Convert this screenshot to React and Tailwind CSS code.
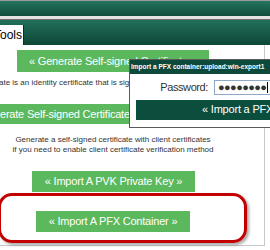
const font = { fontFamily: '"Liberation Sans", Arial, sans-serif' }

function GreenButton({ className, children }) {
  return (
    <div
      className={`flex items-center whitespace-nowrap bg-[#5cb85c] text-[11px] tracking-[-0.2px] text-white ${className}`}
    >
      {children}
    </div>
  )
}

export default function App() {
  return (
    <div
      className="relative h-[250px] w-[270px] overflow-hidden bg-white text-[#333]"
      style={font}
    >
      {/* header bars */}
      <div className="h-px bg-[#9a9a9a]" />
      <div className="h-[15px] bg-gradient-to-b from-[#25765f] to-[#0f4b3c]" />
      <div className="h-[3px] bg-[#e2e2e2]" />
      <div className="h-px bg-[#6f6f6f]" />
      <div className="flex h-[25px] items-end bg-gradient-to-b from-[#22705a] to-[#0e4737]">
        <div className="flex h-[20px] w-[24px] items-center justify-end overflow-hidden border-r border-[#0a3026] bg-white pr-[1px] text-[12px] text-black">
          Tools
        </div>
      </div>

      {/* content */}
      <div className="flex h-[201px] w-[265px] flex-col border-r border-b border-[#c8c8c8]">
        <GreenButton className="ml-[17px] mt-[5px] h-[22px] w-[192px] pl-[12px]">
          « Generate Self-signed Certificate »
        </GreenButton>
        <p className="-ml-[1px] mt-[6px] h-[10px] whitespace-nowrap text-[8px] leading-[10px]">
          ate is an identity certificate that is signed by its own creator.
        </p>
        <GreenButton className="-ml-[40px] mt-[16px] h-[20px] w-[200px] pl-[11px]">
          « Generate Self-signed Certificate »
        </GreenButton>
        <div className="mt-[11px] w-[226px] text-center text-[8px] leading-[10px]">
          <p className="whitespace-nowrap">Generate a self-signed certificate with client certificates</p>
          <p className="whitespace-nowrap">if you need to enable client certificate verification method</p>
        </div>
        <GreenButton className="ml-[32px] mt-[16px] h-[21px] w-[163px] justify-center">
          « Import A PVK Private Key »
        </GreenButton>
        <GreenButton className="ml-[36px] mt-[19px] h-[21px] w-[154px] justify-center">
          « Import A PFX Container »
        </GreenButton>
      </div>

      {/* annotation */}
      <div className="absolute left-[-2px] top-[193px] h-[50px] w-[249px] rounded-[14px] border-[3px] border-[#c20000] shadow-[2px_2px_3px_rgba(0,0,0,0.35)]" />

      {/* popup */}
      <div className="absolute left-[129px] top-[59px] h-[69px] w-[170px] border border-[#5a5a5a] bg-white">
        <div className="h-[14px] whitespace-nowrap bg-[#0d4a3b] pl-[1px] text-[6.5px] font-bold leading-[14px] text-white">
          Import a PFX container:upload:win-export1
        </div>
        <div className="mt-[5px] flex items-center">
          <span className="w-[78px] text-right text-[11px] tracking-[-0.4px] text-[#333]">Password:</span>
          <div className="ml-[6px] flex h-[15px] w-[80px] items-center border border-[#8ea8c8] pl-[3px] text-[11px] tracking-[-0.6px] text-[#333]">
            ●●●●●●●●<span className="ml-[1px] h-[11px] w-px bg-black" />
          </div>
        </div>
        <div className="ml-[6px] mt-[4px] flex h-[20px] w-[200px] items-center whitespace-nowrap bg-[#0c4e3d] pl-[66px] text-[11px] tracking-[-0.2px] text-white">
          « Import a PFX container »
        </div>
      </div>
    </div>
  )
}
